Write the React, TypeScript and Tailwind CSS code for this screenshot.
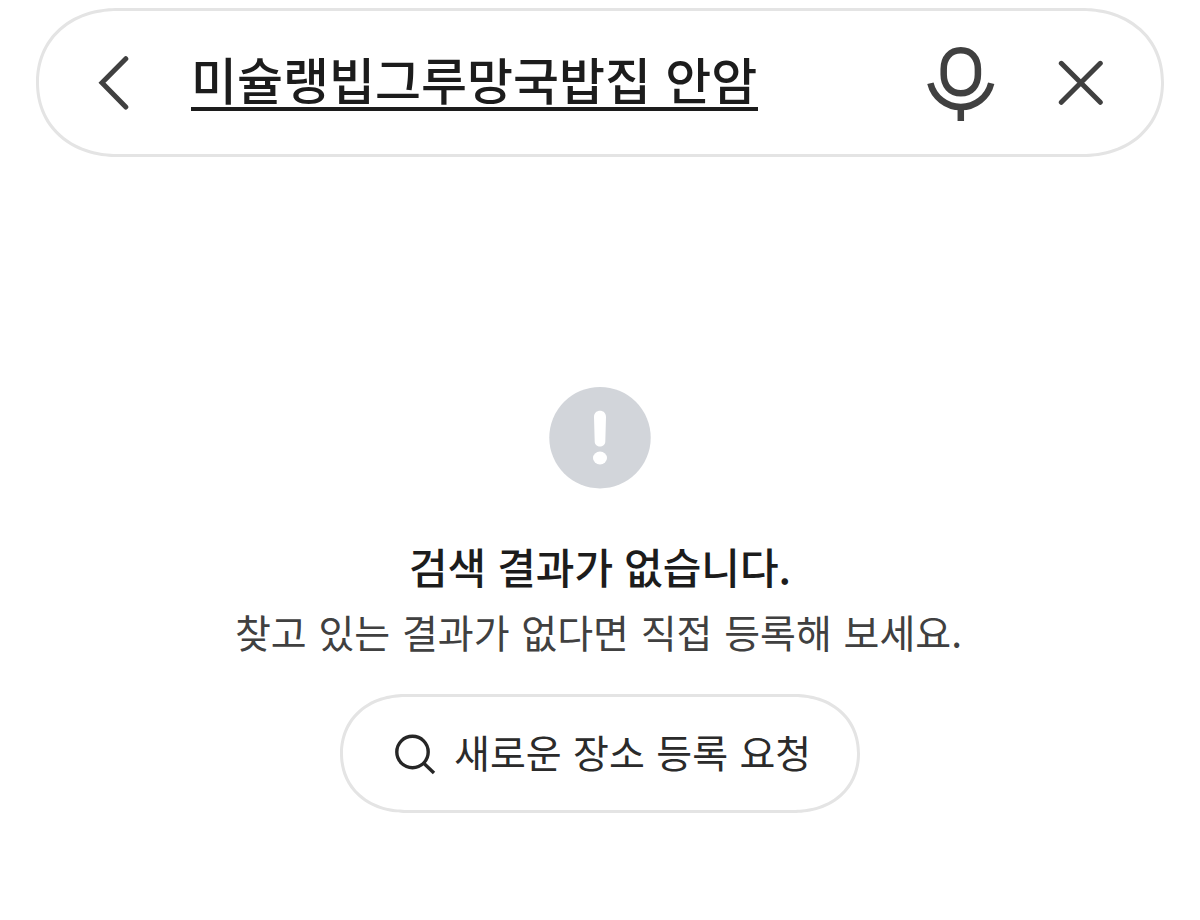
function BackIcon() {
  return (
    <svg width="32" height="56" viewBox="0 0 32 56" fill="none" stroke="#404040" strokeWidth="5" strokeLinecap="round" strokeLinejoin="miter">
      <path d="M28.800 3.700 5 27.800 28.800 52" />
    </svg>
  );
}

function MicIcon() {
  return (
    <svg width="68" height="75" viewBox="0 0 68 75" fill="none" stroke="#404040" strokeWidth="6.500">
      <path d="M33.800 3.300C44.300 3.300 50.900 11 50.900 22V27.500C50.900 38.500 44.300 46.300 33.800 46.300S16.700 38.500 16.700 27.500V22C16.700 11 23.300 3.300 33.800 3.300Z" />
      <path d="M3.400 36.200A31.300 31.300 0 0 0 64.200 36.200" />
      <path d="M33.800 60V74" />
    </svg>
  );
}

function CloseIcon() {
  return (
    <svg width="46" height="46" viewBox="0 0 46 46" fill="none" stroke="#404040" strokeWidth="5" strokeLinecap="round">
      <path d="M3.300 3.300 42.300 42.300M42.300 3.300 3.300 42.300" />
    </svg>
  );
}

function NoticeIcon() {
  return (
    <svg width="102" height="102" viewBox="0 0 102 102">
      <circle cx="51" cy="50.700" r="50.700" fill="#d2d5da" />
      <path d="M45 30C45 21.800 57 21.800 57 30L56.300 54.500C56.200 61.200 45.800 61.200 45.700 54.500Z" fill="#fff" />
      <ellipse cx="51" cy="71" rx="7" ry="6.500" fill="#fff" />
    </svg>
  );
}

function SearchIcon() {
  return (
    <svg width="42" height="42" viewBox="0 0 42 42" fill="none" stroke="#262626" strokeWidth="3.400">
      <circle cx="18.500" cy="19" r="15.700" />
      <path d="M29.300 29.800 40 40" />
    </svg>
  );
}

export default function App() {
  return (
    <div className="flex h-[920px] w-[1200px] flex-col overflow-hidden bg-white px-9 pt-2 font-['Noto_Sans_CJK_KR',sans-serif]">
      <header className="flex h-[149px] w-full shrink-0 items-center rounded-[82px/74.500px] border-[3px] border-[#e4e4e4] pr-[57px] pl-[58px] [corner-shape:superellipse(1.1)]">
        <button aria-label="뒤로" className="flex shrink-0">
          <BackIcon />
        </button>
        <div className="ml-[62px] flex h-[57px] w-[567px] shrink-0 items-center border-b-4 border-[#1c1c1c] pb-[6px] text-[50px] leading-[58px] font-medium whitespace-nowrap text-[#1c1c1c] [word-spacing:3px]">
          미슐랭빕그루망국밥집 안암
        </div>
        <button aria-label="음성 검색" className="mt-1 ml-auto flex shrink-0">
          <MicIcon />
        </button>
        <button aria-label="지우기" className="ml-[63px] flex shrink-0">
          <CloseIcon />
        </button>
      </header>
      <main className="flex flex-col items-center pt-[230px]">
        <NoticeIcon />
        <h1 className="mt-[45px] text-[42px] leading-[64px] font-medium whitespace-nowrap text-[#1c1c1c] [word-spacing:1.5px]">검색 결과가 없습니다.</h1>
        <p className="mt-[3px] pr-[3px] text-[39px] leading-[60px] whitespace-nowrap text-[#404040] [word-spacing:3px]">찾고 있는 결과가 없다면 직접 등록해 보세요.</p>
        <button className="mt-[33px] flex h-[119px] w-[520px] items-center rounded-[66px/59.500px] border-[3px] border-[#e4e4e4] pl-[51px] text-[39px] leading-[60px] whitespace-nowrap text-[#2b2b2b] [corner-shape:superellipse(1.1)]">
          <SearchIcon />
          <span className="mb-[6px] ml-[18px] [word-spacing:2.700px]">새로운 장소 등록 요청</span>
        </button>
      </main>
    </div>
  );
}
